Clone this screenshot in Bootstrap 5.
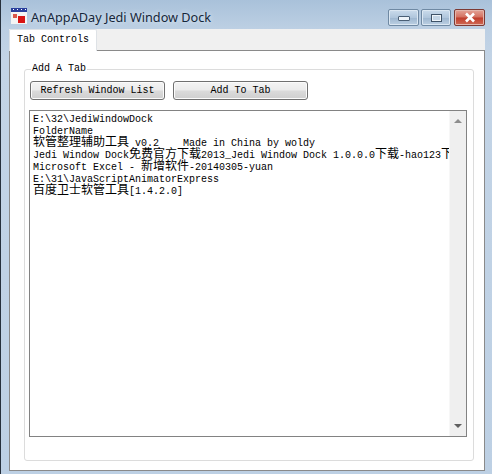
<!DOCTYPE html>
<html lang="en">
<head>
    <meta charset="UTF-8">
    <title>AnAppADay Jedi Window Dock</title>
    <link href="https://cdn.jsdelivr.net/npm/bootstrap@5.3.0/dist/css/bootstrap.min.css" rel="stylesheet">
    <style>
        html, body {
            height: 474px;
            overflow: hidden;
        }

        body {
            background: linear-gradient(180deg, #a9c1da 0, #bccfe3 28px, #c3d4e6 60px, #bdd0e4 100%);
        }

        .app-window {
            height: 474px;
            padding-left: 8px;
            padding-right: 7px;
            border-left: 2px solid #26303c;
            margin-left: -1px;
        }

        /* title bar */
        .title-bar {
            height: 29px;
            padding-top: 9px;
        }

        .app-logo {
            width: 16px;
            height: 16px;
            margin-left: 2px;
            margin-right: 4px;
            margin-top: -1px;
        }

        .app-title {
            font-family: "Noto Sans", sans-serif;
            font-size: 12.7px;
            line-height: 17px;
            color: #16273a;
            text-shadow: 0 0 5px #e6eff7;
        }

        .win-btn {
            width: 31px;
            height: 17px;
            border: 1px solid #6f89a3;
            border-radius: 2px;
            background: linear-gradient(180deg, #cbdcec 0, #b0c6dc 50%, #9db6cf 52%, #bcd0e3 100%);
            box-shadow: inset 0 0 0 1px #dbe7f2;
        }

        .win-btn-max {
            width: 30px;
            margin: 0 3px 0 2px;
        }

        .win-btn-close {
            border-color: #7d3a34;
            background: linear-gradient(180deg, #e3a397 0, #d4705f 48%, #bf3c2b 52%, #cf6a55 100%);
            box-shadow: inset 0 0 0 1px #e4b6ac;
        }

        .glyph-min {
            width: 12px;
            height: 5px;
            border: 1px solid #4a5f75;
            border-radius: 1px;
            background: #eef4f9;
            margin-top: 6px;
        }

        .glyph-max {
            width: 11px;
            height: 8px;
            border: 1px solid #3f5368;
            background: #c5d6e6;
            box-shadow: inset 0 0 0 1px #eef4f9;
        }

        /* tab strip */
        .tab-strip {
            height: 21px;
            background: #f0f0f0;
            border: 0;
            flex-wrap: nowrap;
        }

        .tab-strip .nav-link {
            width: 88px;
            height: 22px;
            padding: 4px 0 0 7px;
            margin: 0;
            background: #fff;
            color: #000;
            border: 1px solid #8c8c8c;
            border-bottom: 0;
            border-radius: 2px 2px 0 0;
            position: relative;
            z-index: 1;
        }

        .mono-text {
            font-family: "Liberation Mono", monospace;
            font-size: 10px;
            line-height: 12px;
            color: #000;
        }

        /* tab body */
        .tab-body {
            height: 421px;
            background: #fff;
            border: 1px solid #8a8a8a;
            padding: 12px 10px 10px 14px;
        }

        .group-frame {
            height: 398px;
            margin: 0;
            padding: 0 6px 0 5px;
            border: 1px solid #dcdcdc;
            border-radius: 3px;
        }

        .group-frame legend {
            font-size: 10px;
            line-height: 12px;
            margin: 1px 0 6px 1px;
            padding: 0 1px;
        }

        .win-action {
            width: 135px;
            height: 19px;
            padding: 0;
            border: 1px solid #707070;
            border-radius: 3px;
            background: linear-gradient(180deg, #f4f4f4 0, #ebebeb 48%, #dbdbdb 52%, #cfcfcf 100%);
            box-shadow: inset 0 0 0 1px #fbfbfb;
        }

        .list-frame {
            height: 327px;
            margin: 10px 0 0 -1px;
            border: 1px solid #828282;
        }

        .list-text {
            padding: 3px 0 0 3px;
            overflow: hidden;
            min-width: 0;
        }

        .list-line {
            height: 12px;
            white-space: pre;
        }

        /* line-height 0 so the CJK font does not push the mono baseline down */
        .cjk-run {
            font-family: "Noto Sans CJK SC", sans-serif;
            font-size: 12px;
            line-height: 0;
            color: #000;
        }

        .scroll-rail {
            width: 17px;
            background: #efefef;
            border-left: 1px solid #f7f7f7;
            padding: 8px 0 8px;
        }

        .scroll-up, .scroll-down {
            width: 0;
            height: 0;
            border-left: 4px solid transparent;
            border-right: 4px solid transparent;
        }

        .scroll-up {
            border-bottom: 4px solid #8d8d8d;
        }

        .scroll-down {
            border-top: 4px solid #5f5f5f;
        }
    </style>
</head>
<body class="m-0">
<div class="app-window d-flex flex-column">
    <div class="title-bar d-flex align-items-start">
        <svg class="app-logo flex-shrink-0" viewBox="0 0 16 16" aria-hidden="true">
            <rect width="16" height="16" fill="#f4f4f4"/>
            <rect width="16" height="4" fill="#2a3f9c"/>
            <path d="M2 1h1v1H2zM6 1h1v1H6zM10 1h1v1h-1zM14 1h1v1h-1z" fill="#fff"/>
            <rect x="2" y="6" width="4" height="4" fill="#d9574a"/>
            <rect x="7" y="8" width="7" height="7" fill="#d81414"/>
        </svg>
        <span class="app-title">AnAppADay Jedi Window Dock</span>
        <div class="d-flex ms-auto">
            <div class="win-btn d-flex justify-content-center"><div class="glyph-min"></div></div>
            <div class="win-btn win-btn-max d-flex justify-content-center align-items-center"><div class="glyph-max"></div></div>
            <div class="win-btn win-btn-close d-flex justify-content-center align-items-center">
                <svg width="14" height="11" viewBox="0 0 14 11" aria-hidden="true">
                    <path d="M3 1.5l8 8M11 1.5l-8 8" stroke="#fff" stroke-width="2.6" fill="none"/>
                </svg>
            </div>
        </div>
    </div>

    <ul class="nav nav-tabs tab-strip">
        <li class="nav-item">
            <a class="nav-link active mono-text" href="#">Tab Controls</a>
        </li>
    </ul>

    <div class="tab-body">
        <fieldset class="group-frame d-flex flex-column">
            <legend class="float-none w-auto mono-text">Add A Tab</legend>
            <div class="d-flex gap-2">
                <button class="btn win-action mono-text" type="button">Refresh Window List</button>
                <button class="btn win-action mono-text" type="button">Add To Tab</button>
            </div>
            <div class="list-frame d-flex">
                <div class="list-text mono-text flex-grow-1">
                    <div class="list-line">E:\32\JediWindowDock</div>
                    <div class="list-line">FolderName</div>
                    <div class="list-line"><span class="cjk-run">软管整理辅助工具</span> v0.2    Made in China by woldy</div>
                    <div class="list-line">Jedi Window Dock<span class="cjk-run">免费官方下载</span>2013_Jedi Window Dock 1.0.0.0<span class="cjk-run">下载</span>-hao123<span class="cjk-run">下</span></div>
                    <div class="list-line">Microsoft Excel - <span class="cjk-run">新增软件</span>-20140305-yuan</div>
                    <div class="list-line">E:\31\JavaScriptAnimatorExpress</div>
                    <div class="list-line"><span class="cjk-run">百度卫士软管工具</span>[1.4.2.0]</div>
                </div>
                <div class="scroll-rail d-flex flex-column align-items-center justify-content-between flex-shrink-0">
                    <div class="scroll-up"></div>
                    <div class="scroll-down"></div>
                </div>
            </div>
        </fieldset>
    </div>
</div>
<script src="https://cdn.jsdelivr.net/npm/bootstrap@5.3.0/dist/js/bootstrap.bundle.min.js"></script>
</body>
</html>
